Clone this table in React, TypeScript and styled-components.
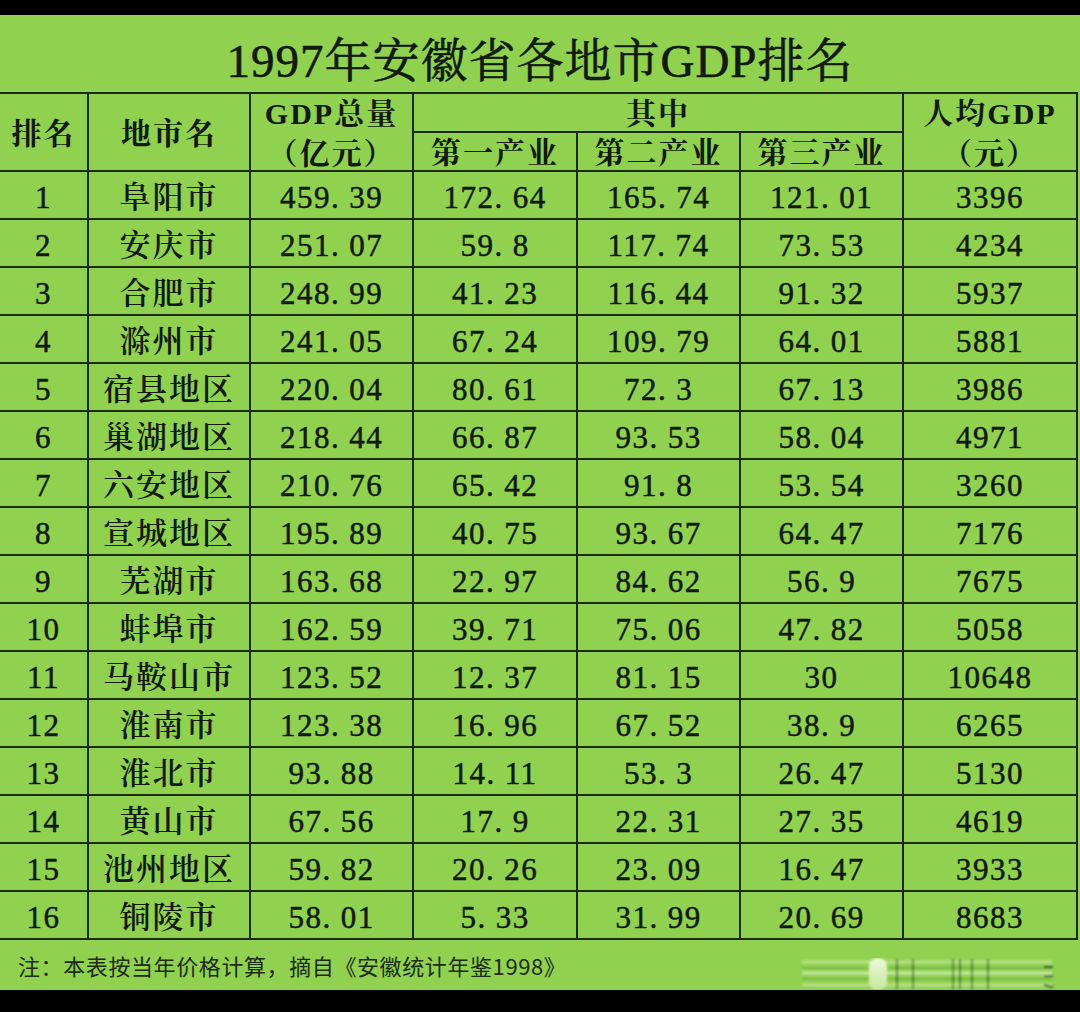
import styled, { createGlobalStyle } from 'styled-components';

const GlobalStyle = createGlobalStyle`
  html, body {
    margin: 0;
    padding: 0;
    background: #000;
  }
`;

const LINE = '#1c2a14';

const Frame = styled.div`
  width: 1080px;
  height: 1012px;
  box-sizing: border-box;
  padding: 15px 0 22px;
  background: #000;
`;

const Sheet = styled.div`
  height: 100%;
  display: flex;
  flex-direction: column;
  background: #90d150;
  color: #111a0c;
  font-family: 'Liberation Serif', 'Noto Serif CJK SC', 'Noto Sans CJK SC', serif;
`;

const Title = styled.h1`
  margin: 0;
  height: 77px;
  padding-top: 6px;
  box-sizing: border-box;
  display: flex;
  align-items: center;
  justify-content: center;
  font-size: 47px;
  font-weight: 400;
  letter-spacing: 1px;
  -webkit-text-stroke: 0.6px currentColor;
`;

const Grid = styled.div`
  width: 1078px;
  display: grid;
  grid-template-columns: 89px 162px 163px 164px 163px 163px 174px;
  grid-template-rows: 39px 39px repeat(16, 48px);
  border-top: 2px solid ${LINE};
`;

const Cell = styled.div<{ $col?: string; $row?: string; $head?: boolean }>`
  grid-column: ${(p) => p.$col ?? 'auto'};
  grid-row: ${(p) => p.$row ?? 'auto'};
  box-sizing: border-box;
  padding-top: ${(p) => (p.$head ? '3px' : '5px')};
  border-right: 2px solid ${LINE};
  border-bottom: 2px solid ${LINE};
  display: flex;
  flex-direction: column;
  align-items: center;
  justify-content: center;
  font-size: ${(p) => (p.$head ? '30px' : '31px')};
  line-height: 40px;
  font-weight: ${(p) => (p.$head ? 700 : 400)};
  letter-spacing: ${(p) => (p.$head ? '2px' : '1.5px')};
  -webkit-text-stroke: ${(p) => (p.$head ? '0' : '0.5px')} currentColor;
  white-space: nowrap;
`;

const Name = styled.span`
  font-weight: 600;
  letter-spacing: 2px;
  -webkit-text-stroke: 0;
`;

const Dot = styled.span`
  margin: 0 9px 0 0;
`;

const Footer = styled.div`
  flex: 1;
  display: flex;
  align-items: center;
  padding-left: 18px;
  font-family: 'Noto Sans CJK SC', sans-serif;
  font-size: 22px;
  letter-spacing: 0.6px;
  color: #1e2c16;
`;

const Mark = styled.svg`
  margin-left: auto;
  margin-right: 24px;
  align-self: flex-end;
`;

const rows: [number, string, string, string, string, string, string][] = [
  [1, '阜阳市', '459.39', '172.64', '165.74', '121.01', '3396'],
  [2, '安庆市', '251.07', '59.8', '117.74', '73.53', '4234'],
  [3, '合肥市', '248.99', '41.23', '116.44', '91.32', '5937'],
  [4, '滁州市', '241.05', '67.24', '109.79', '64.01', '5881'],
  [5, '宿县地区', '220.04', '80.61', '72.3', '67.13', '3986'],
  [6, '巢湖地区', '218.44', '66.87', '93.53', '58.04', '4971'],
  [7, '六安地区', '210.76', '65.42', '91.8', '53.54', '3260'],
  [8, '宣城地区', '195.89', '40.75', '93.67', '64.47', '7176'],
  [9, '芜湖市', '163.68', '22.97', '84.62', '56.9', '7675'],
  [10, '蚌埠市', '162.59', '39.71', '75.06', '47.82', '5058'],
  [11, '马鞍山市', '123.52', '12.37', '81.15', '30', '10648'],
  [12, '淮南市', '123.38', '16.96', '67.52', '38.9', '6265'],
  [13, '淮北市', '93.88', '14.11', '53.3', '26.47', '5130'],
  [14, '黄山市', '67.56', '17.9', '22.31', '27.35', '4619'],
  [15, '池州地区', '59.82', '20.26', '23.09', '16.47', '3933'],
  [16, '铜陵市', '58.01', '5.33', '31.99', '20.69', '8683'],
];

function Num({ v }: { v: string }) {
  const [int, dec] = v.split('.');
  return (
    <span>
      {int}
      {dec !== undefined && (
        <>
          <Dot>.</Dot>
          {dec}
        </>
      )}
    </span>
  );
}

function Watermark() {
  return (
    <Mark width="256" height="32" viewBox="0 0 256 32">
      <defs>
        <filter id="soft" x="-5%" y="-20%" width="110%" height="140%">
          <feGaussianBlur stdDeviation="1.1" />
        </filter>
        <linearGradient id="pill" x1="0" y1="0" x2="0" y2="1">
          <stop offset="0" stopColor="#eef8dc" />
          <stop offset="1" stopColor="#c4e79c" />
        </linearGradient>
      </defs>
      <g filter="url(#soft)">
        <line x1="2" y1="4" x2="252" y2="4" stroke="#eaf6d8" strokeWidth="3" opacity="0.45" />
        <line x1="2" y1="10" x2="252" y2="10" stroke="#3d6a22" strokeWidth="1.5" opacity="0.3" />
        <line x1="2" y1="15" x2="252" y2="15" stroke="#f2faea" strokeWidth="3" opacity="0.55" />
        <line x1="2" y1="21" x2="252" y2="21" stroke="#3d6a22" strokeWidth="1.5" opacity="0.3" />
        <line x1="2" y1="27" x2="252" y2="27" stroke="#eaf6d8" strokeWidth="3" opacity="0.45" />
        <line x1="244" y1="9" x2="253" y2="9" stroke="#1c2a14" strokeWidth="2" opacity="0.7" />
        <line x1="244" y1="18" x2="253" y2="18" stroke="#1c2a14" strokeWidth="2" opacity="0.7" />
        <line x1="244" y1="27" x2="253" y2="29" stroke="#1c2a14" strokeWidth="2" opacity="0.7" />
        <rect x="69" y="0" width="18" height="32" rx="8" fill="url(#pill)" />
        {[97, 113, 153, 160, 172, 188].map((x) => (
          <line key={x} x1={x} y1="1" x2={x} y2="31" stroke="#2a5416" strokeWidth="2.5" opacity="0.5" />
        ))}
      </g>
    </Mark>
  );
}

export default function App() {
  return (
    <Frame>
      <GlobalStyle />
      <Sheet>
        <Title>1997年安徽省各地市GDP排名</Title>
        <Grid>
          <Cell $head $col="1" $row="1 / 3">排名</Cell>
          <Cell $head $col="2" $row="1 / 3">地市名</Cell>
          <Cell $head $col="3" $row="1 / 3">
            <span>GDP总量</span>
            <span>（亿元）</span>
          </Cell>
          <Cell $head $col="4 / 7" $row="1">其中</Cell>
          <Cell $head $col="7" $row="1 / 3">
            <span>人均GDP</span>
            <span>（元）</span>
          </Cell>
          <Cell $head $col="4" $row="2">第一产业</Cell>
          <Cell $head $col="5" $row="2">第二产业</Cell>
          <Cell $head $col="6" $row="2">第三产业</Cell>
          {rows.map(([rank, name, total, p1, p2, p3, per]) => (
            <div key={rank} style={{ display: 'contents' }}>
              <Cell>{rank}</Cell>
              <Cell>
                <Name>{name}</Name>
              </Cell>
              <Cell>
                <Num v={total} />
              </Cell>
              <Cell>
                <Num v={p1} />
              </Cell>
              <Cell>
                <Num v={p2} />
              </Cell>
              <Cell>
                <Num v={p3} />
              </Cell>
              <Cell>{per}</Cell>
            </div>
          ))}
        </Grid>
        <Footer>
          <span>注：本表按当年价格计算，摘自《安徽统计年鉴1998》</span>
          <Watermark />
        </Footer>
      </Sheet>
    </Frame>
  );
}
